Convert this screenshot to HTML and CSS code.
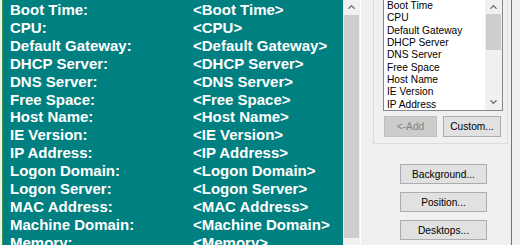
FILE: index.html
```html
<!DOCTYPE html>
<html>
<head>
<meta charset="utf-8">
<title>BGInfo</title>
<link rel="stylesheet" href="styles.css">
</head>
<body>
<div class="window">
  <div class="editor">
    <div class="preview">
      <span>Boot Time:</span><span>&lt;Boot Time&gt;</span>
      <span>CPU:</span><span>&lt;CPU&gt;</span>
      <span>Default Gateway:</span><span>&lt;Default Gateway&gt;</span>
      <span>DHCP Server:</span><span>&lt;DHCP Server&gt;</span>
      <span>DNS Server:</span><span>&lt;DNS Server&gt;</span>
      <span>Free Space:</span><span>&lt;Free Space&gt;</span>
      <span>Host Name:</span><span>&lt;Host Name&gt;</span>
      <span>IE Version:</span><span>&lt;IE Version&gt;</span>
      <span>IP Address:</span><span>&lt;IP Address&gt;</span>
      <span>Logon Domain:</span><span>&lt;Logon Domain&gt;</span>
      <span>Logon Server:</span><span>&lt;Logon Server&gt;</span>
      <span>MAC Address:</span><span>&lt;MAC Address&gt;</span>
      <span>Machine Domain:</span><span>&lt;Machine Domain&gt;</span>
      <span>Memory:</span><span>&lt;Memory&gt;</span>
    </div>
    <div class="vscroll big">
      <div class="sb-btn up"><svg width="7" height="4" viewBox="0 0 7 4"><polyline points="0.5,3.7 3.5,0.7 6.5,3.7" fill="none" stroke="#606060" stroke-width="1.2"/></svg></div>
      <div class="sb-track"><div class="sb-thumb"></div></div>
    </div>
  </div>
  <div class="side">
    <div class="group">
      <div class="listbox">
        <ul class="items">
          <li>Boot Time</li>
          <li>CPU</li>
          <li>Default Gateway</li>
          <li>DHCP Server</li>
          <li>DNS Server</li>
          <li>Free Space</li>
          <li>Host Name</li>
          <li>IE Version</li>
          <li>IP Address</li>
        </ul>
        <div class="vscroll small">
          <div class="sb-btn up"><svg width="7" height="4" viewBox="0 0 7 4"><polyline points="0.5,3.7 3.5,0.7 6.5,3.7" fill="none" stroke="#606060" stroke-width="1.2"/></svg></div>
          <div class="sb-track"><div class="sb-thumb"></div></div>
          <div class="sb-btn down"><svg width="7" height="4" viewBox="0 0 7 4"><polyline points="0.5,0.3 3.5,3.3 6.5,0.3" fill="none" stroke="#606060" stroke-width="1.2"/></svg></div>
        </div>
      </div>
      <div class="group-actions">
        <button class="btn add" disabled>&lt;-Add</button>
        <button class="btn custom">Custom...</button>
      </div>
    </div>
    <div class="actions">
      <button class="btn wide">Background...</button>
      <button class="btn wide">Position...</button>
      <button class="btn wide">Desktops...</button>
    </div>
  </div>
</div>
</body>
</html>
```
FILE: styles.css
```css
html, body {
  margin: 0;
  height: 245px;
  overflow: hidden;
  background: #f0f0f0;
}

.window {
  display: flex;
  margin: -2px 0 0 2px;
  width: 510px;
  height: 262px;
  box-sizing: border-box;
  border-left: 1px solid #3a9a4a;
  border-right: 1px solid #3a9a4a;
  background: #f0f0f0;
}

.editor {
  display: flex;
  flex: none;
  border-right: 1px solid #ffffff;
}

.preview {
  width: 340px;
  box-sizing: border-box;
  padding: 3px 0 0 7px;
  background: #008080;
  color: #ffffff;
  font: bold 15px/17.9px "Liberation Sans", Arial, sans-serif;
  display: grid;
  grid-template-columns: 183px auto;
  align-content: start;
  overflow: hidden;
  white-space: nowrap;
}

.vscroll {
  width: 17px;
  flex: none;
  display: flex;
  flex-direction: column;
  background: #f0f0f0;
}

.sb-btn {
  flex: none;
  height: 17px;
  display: flex;
  align-items: center;
  justify-content: center;
}

.sb-btn svg {
  display: block;
}

.sb-track {
  flex: 1;
  display: flex;
  flex-direction: column;
}

.sb-thumb {
  background: #cdcdcd;
  margin: 0 1px;
}

.big .sb-thumb {
  height: 223px;
}

.small .sb-btn.up {
  height: 14px;
}

.small .sb-thumb {
  height: 36px;
}

.side {
  width: 150px;
  flex: none;
}

.group {
  margin-left: 12px;
  width: 135px;
  box-sizing: border-box;
  border: 1px solid #dcdcdc;
  padding: 0 4px 6px 9px;
}

.listbox {
  display: flex;
  height: 112px;
  box-sizing: border-box;
  border: 1px solid #828790;
  background: #ffffff;
}

.items {
  flex: 1;
  margin: 0;
  padding: 0 0 0 3px;
  list-style: none;
  font: 10.2px/12.33px "Liberation Sans", Arial, sans-serif;
  color: #000000;
  overflow: hidden;
  white-space: nowrap;
}

.group-actions {
  display: flex;
  gap: 6px;
  margin-top: 5px;
  padding-left: 1px;
}

.btn {
  box-sizing: border-box;
  margin: 0;
  padding: 0;
  border: 1px solid #adadad;
  background: #e1e1e1;
  color: #000000;
  font: 10.2px "Liberation Sans", Arial, sans-serif;
  text-align: center;
}

.add {
  width: 53px;
  height: 21px;
  background: #cccccc;
  border-color: #bfbfbf;
  color: #838383;
}

.custom {
  width: 58px;
  height: 21px;
}

.actions {
  display: flex;
  flex-direction: column;
  gap: 8px;
  margin: 20px 0 0 39px;
}

.wide {
  width: 87px;
  height: 20px;
}
```
